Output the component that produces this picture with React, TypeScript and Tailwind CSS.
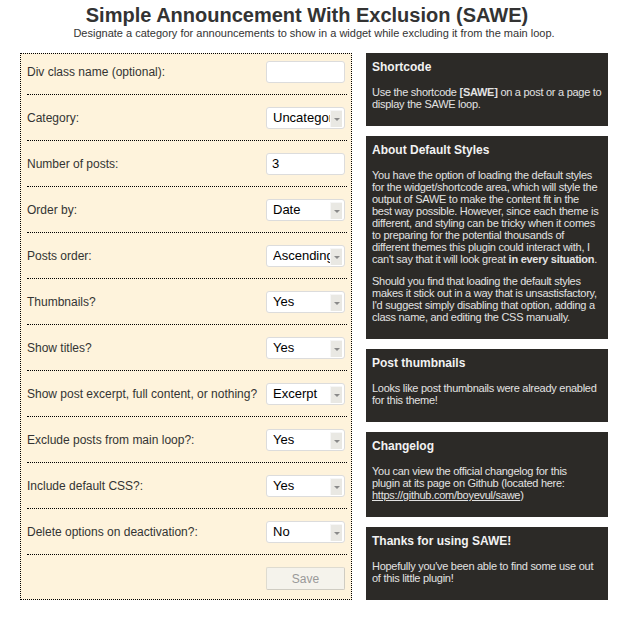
import React from "react";

type Row = { label: string; kind: "input" | "select"; value: string };

const rows: Row[] = [
  { label: "Div class name (optional):", kind: "input", value: "" },
  { label: "Category:", kind: "select", value: "Uncategorized" },
  { label: "Number of posts:", kind: "input", value: "3" },
  { label: "Order by:", kind: "select", value: "Date" },
  { label: "Posts order:", kind: "select", value: "Ascending" },
  { label: "Thumbnails?", kind: "select", value: "Yes" },
  { label: "Show titles?", kind: "select", value: "Yes" },
  { label: "Show post excerpt, full content, or nothing?", kind: "select", value: "Excerpt" },
  { label: "Exclude posts from main loop?:", kind: "select", value: "Yes" },
  { label: "Include default CSS?:", kind: "select", value: "Yes" },
  { label: "Delete options on deactivation?:", kind: "select", value: "No" },
];

function Control({ row }: { row: Row }) {
  if (row.kind === "input") {
    return (
      <div className="mr-[2px] flex h-[22px] w-[79px] shrink-0 items-center rounded-[3px] border border-[#dcdcdc] bg-white pl-[5px] text-[13px] text-black">
        {row.value}
      </div>
    );
  }
  return (
    <div className="mr-[2px] flex h-[22px] w-[79px] shrink-0 items-center rounded-[3px] border border-[#dcdcdc] bg-white pl-[6px] pr-[2px] text-[13px] text-black">
      <span className="min-w-0 flex-1 overflow-hidden whitespace-nowrap leading-[16px]">{row.value}</span>
      <span className="mb-[1px] flex h-[17px] w-[12px] shrink-0 items-center justify-center self-end border-l border-t border-[#f6f6f6] bg-[#e9e8e3]">
        <span className="h-0 w-0 border-l-[3px] border-r-[3px] border-t-[3px] border-l-transparent border-r-transparent border-t-[#8a8a8a]" />
      </span>
    </div>
  );
}

function Line({ children }: { children: React.ReactNode }) {
  return <span className="block whitespace-nowrap">{children}</span>;
}

function Panel({ title, children }: { title: string; children: React.ReactNode }) {
  return (
    <div className="bg-[#2c2a27] px-[6px] pt-[6px] pb-[16px]">
      <div className="mb-[11px] text-[12px] font-bold leading-[16px] text-[#f2f2f2]">{title}</div>
      <div className="text-[11px] leading-[12px] tracking-[-0.27px] text-[#e2e2e2]">{children}</div>
    </div>
  );
}

export default function App() {
  return (
    <div className="h-[618px] w-[628px] bg-white font-['Liberation_Sans',Arial,sans-serif] text-[#333]">
      <div className="pt-[4px] text-center">
        <h1 className="pr-[14px] text-[20px] font-bold leading-[23px] text-[#333]">
          Simple Announcement With Exclusion (SAWE)
        </h1>
        <p className="text-[11px] leading-[12px] text-[#333]">
          Designate a category for announcements to show in a widget while excluding it from the main loop.
        </p>
      </div>

      <div className="mt-[14px] flex gap-[14px] px-[20px]">
        <div className="w-[332px] shrink-0 border border-dotted border-black bg-[#fef3dc] pl-[6px] pr-[4px] pt-[7px] pb-[9px]">
          {rows.map((r) => (
            <div key={r.label}>
              <div className="flex h-[22px] items-center justify-between">
                <span className="whitespace-nowrap text-[12px] text-[#333]">{r.label}</span>
                <Control row={r} />
              </div>
              <div className="mb-[12px] mt-[11px] border-t border-dotted border-black" />
            </div>
          ))}
          <div className="flex justify-end">
            <button className="mr-[2px] h-[23px] w-[79px] rounded-[2px] border border-[#dedbd0] border-b-[#cfccc2] border-r-[#cfccc2] bg-[#f5f3ec] text-[12px] text-[#999]">
              Save
            </button>
          </div>
        </div>

        <div className="flex min-w-0 flex-1 flex-col gap-[10px]">
          <Panel title="Shortcode">
            <Line>
              Use the shortcode <b>[SAWE]</b> on a post or a page to
            </Line>
            <Line>display the SAWE loop.</Line>
          </Panel>

          <Panel title="About Default Styles">
            <div className="mb-[10px]">
              <Line>You have the option of loading the default styles</Line>
              <Line>for the widget/shortcode area, which will style the</Line>
              <Line>output of SAWE to make the content fit in the</Line>
              <Line>best way possible. However, since each theme is</Line>
              <Line>different, and styling can be tricky when it comes</Line>
              <Line>to preparing for the potential thousands of</Line>
              <Line>different themes this plugin could interact with, I</Line>
              <Line>
                can't say that it will look great <b>in every situation</b>.
              </Line>
            </div>
            <div>
              <Line>Should you find that loading the default styles</Line>
              <Line>makes it stick out in a way that is unsastisfactory,</Line>
              <Line>I'd suggest simply disabling that option, adding a</Line>
              <Line>class name, and editing the CSS manually.</Line>
            </div>
          </Panel>

          <Panel title="Post thumbnails">
            <Line>Looks like post thumbnails were already enabled</Line>
            <Line>for this theme!</Line>
          </Panel>

          <Panel title="Changelog">
            <Line>You can view the official changelog for this</Line>
            <Line>plugin at its page on Github (located here:</Line>
            <Line>
              <a className="underline" href="#">https://github.com/boyevul/sawe</a>)
            </Line>
          </Panel>

          <Panel title="Thanks for using SAWE!">
            <Line>Hopefully you've been able to find some use out</Line>
            <Line>of this little plugin!</Line>
          </Panel>
        </div>
      </div>
    </div>
  );
}
